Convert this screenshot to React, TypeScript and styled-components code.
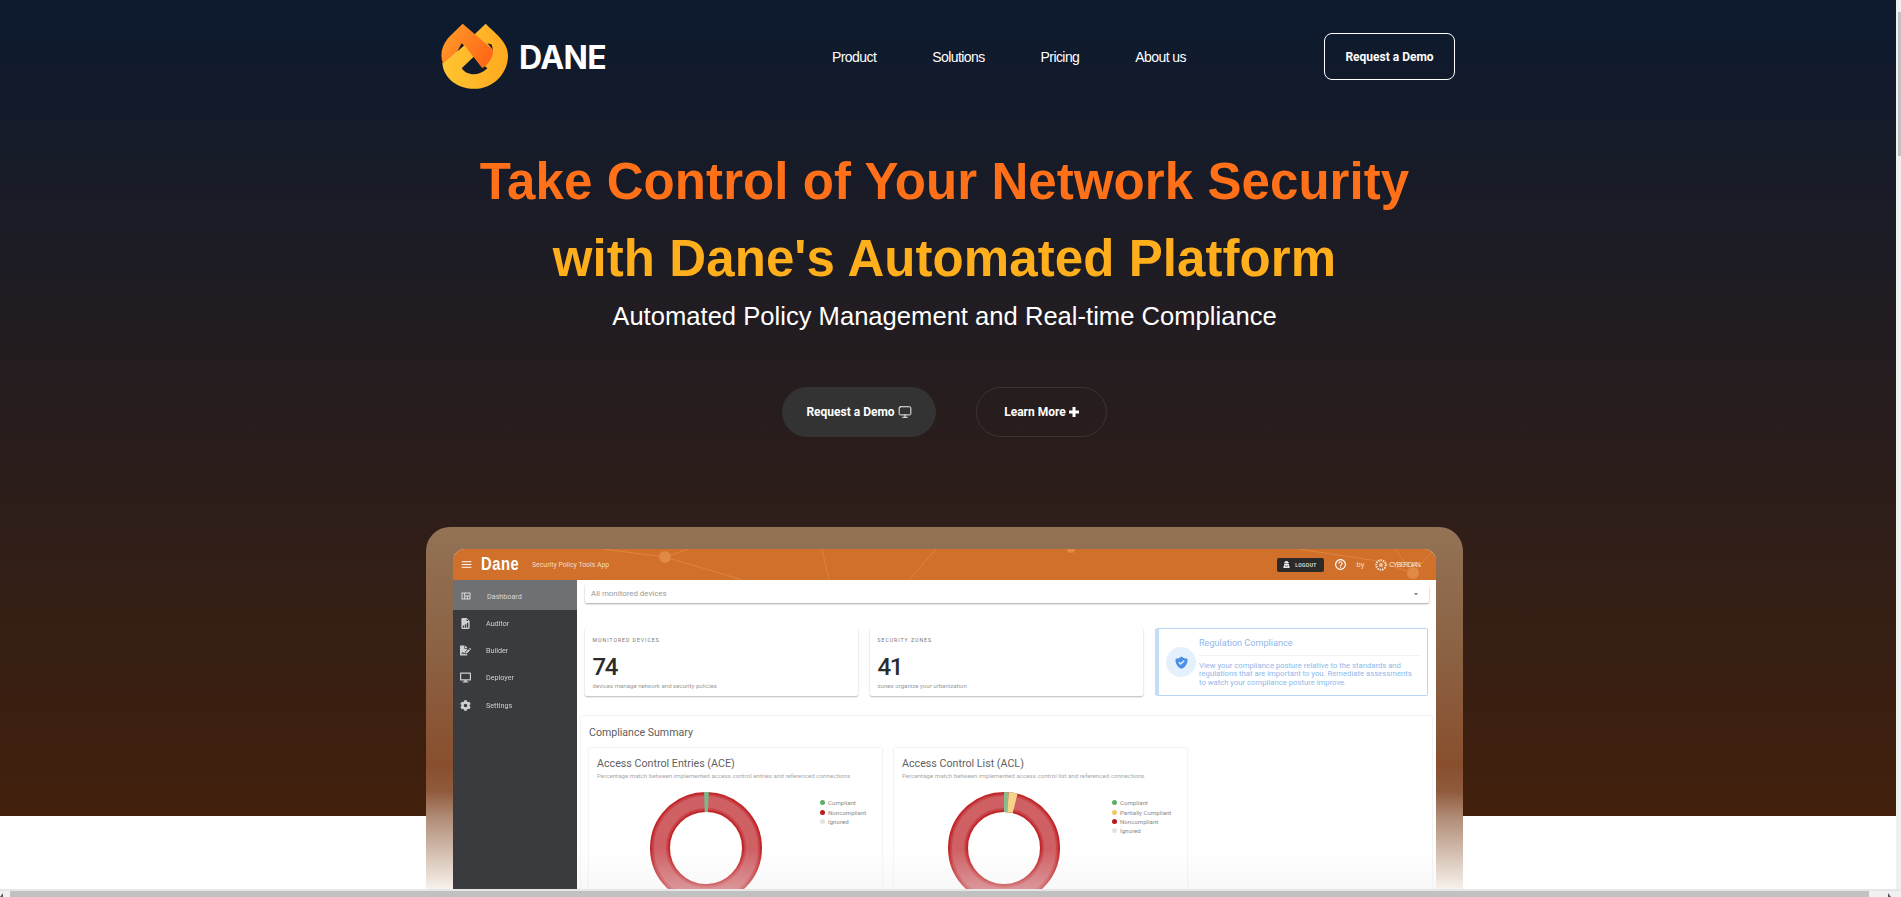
import React from "react";
import styled, { createGlobalStyle } from "styled-components";
import { Monitor } from "lucide-react";
import { FaCog, FaFileSignature, FaUserSecret, FaDesktop } from "react-icons/fa";
import { MdMenu, MdOutlineHelpOutline, MdArrowDropDown, MdOutlineViewQuilt } from "react-icons/md";
import { HiShieldCheck } from "react-icons/hi";
import { BsFileEarmarkBarGraphFill } from "react-icons/bs";

const Global = createGlobalStyle`
  html, body { margin: 0; padding: 0; height: 100%; overflow: hidden; background: #fff; }
  * { box-sizing: border-box; }
`;

const Page = styled.div`
  width: 1896px;
  height: 897px;
  overflow: hidden;
  background: #fff;
  font-family: "Liberation Sans", Arial, sans-serif;
`;
const Hero = styled.section`
  height: 816px;
  background: linear-gradient(180deg, #0c1a2f 0%, #42200c 100%);
  display: flex;
  flex-direction: column;
  align-items: center;
`;
const TopBar = styled.header`
  width: 1014px;
  height: 113px;
  margin-bottom: 30px;
  display: flex;
  align-items: center;
  flex-shrink: 0;
`;
const LogoWrap = styled.a`
  display: flex;
  align-items: center;
  gap: 10px;
  width: 391px;
  color: #fff;
`;
const LogoWord = styled.span`
  font-family: Inter, "Liberation Sans", sans-serif;
  font-weight: 700;
  font-size: 32px;
  line-height: 1;
  letter-spacing: -0.6px;
  margin-top: 2px;
`;
const Nav = styled.nav`
  display: flex;
  gap: 56px;
  flex: 1;
`;
const NavLink = styled.a`
  color: #fff;
  font-size: 14px;
  letter-spacing: -0.58px;
  white-space: nowrap;
`;
const DemoOutline = styled.a`
  width: 131px;
  height: 47px;
  border: 1px solid #fff;
  border-radius: 8px;
  display: flex;
  align-items: center;
  justify-content: center;
  color: #fff;
  font: 700 12px Roboto, sans-serif;
`;
const Center = styled.div`
  width: 1889px;
  margin-right: 7px;
  display: flex;
  flex-direction: column;
  align-items: center;
  flex-shrink: 0;
`;
const Title = styled.h1<{ $color: string }>`
  margin: 0;
  height: 77px;
  line-height: 77px;
  color: ${(p) => p.$color};
  font-size: 51px;
  font-weight: 700;
  letter-spacing: 0.08px;
  white-space: nowrap;
`;
const Sub = styled.p`
  margin: 1px 0 0;
  color: #fff;
  font-size: 25.6px;
  line-height: 36px;
`;
const Actions = styled.div`
  display: flex;
  gap: 40px;
  margin-top: 53px;
`;
const Pill = styled.a<{ $filled?: boolean }>`
  height: 50px;
  width: ${(p) => (p.$filled ? 154 : 131)}px;
  border-radius: 25px;
  background: ${(p) => (p.$filled ? "#333333" : "transparent")};
  border: 1px solid ${(p) => (p.$filled ? "#333333" : "#3e3333")};
  display: flex;
  align-items: center;
  justify-content: center;
  gap: 3px;
  color: #fff;
  font: 700 12px Roboto, sans-serif;
`;
const Laptop = styled.div`
  width: 1037px;
  height: 372px;
  margin-top: 90px;
  padding: 22px 27px 0;
  border-radius: 24px 24px 0 0;
  background: linear-gradient(180deg, #937256 0%, #8c6446 30%, #884f2e 64%, #8f5a3c 71%, #b08c76 78%, #faf5f0 98%);
`;
const Screen = styled.div`
  position: relative;
  height: 350px;
  border-radius: 12px 12px 0 0;
  overflow: hidden;
  background: #fff;
  filter: blur(0.45px);
  font-family: Roboto, sans-serif;
  display: flex;
  flex-direction: column;
`;
const AppBar = styled.div`
  position: relative;
  height: 31px;
  flex-shrink: 0;
  background: #d0702a;
  display: flex;
  align-items: center;
  padding: 0 15px 0 7px;
  color: #fff;
  box-shadow: 0 1px 1px rgba(0, 0, 0, 0.3);
`;
const BarArt = styled.svg`
  position: absolute;
  inset: 0;
  width: 100%;
  height: 100%;
`;
const BarGroup = styled.div<{ $end?: boolean }>`
  position: relative;
  display: flex;
  align-items: center;
  margin-left: ${(p) => (p.$end ? "auto" : "0")};
`;
const Brand = styled.span`
  font: 700 18px "Liberation Sans", sans-serif;
  transform: scaleX(0.82);
  transform-origin: left;
  letter-spacing: 0.7px;
  margin-left: 8px;
  width: 41px;
`;
const AppName = styled.span`
  font-size: 6.9px;
  color: #f5dcc8;
  margin-left: 4px;
  padding-left: 6px;
`;
const Logout = styled.span`
  width: 47px;
  height: 14px;
  background: #2c2a28;
  border-radius: 2px;
  display: flex;
  align-items: center;
  justify-content: center;
  gap: 5px;
  font-size: 5px;
  font-weight: 500;
  letter-spacing: 0.4px;
  color: #eee;
`;
const HelpSlot = styled.span`
  display: flex;
  margin-left: 10px;
`;
const By = styled.span`
  font-size: 7.5px;
  color: #f5dcc8;
  margin-left: 10px;
`;
const Cyber = styled.span`
  display: flex;
  align-items: center;
  gap: 1px;
  margin-left: 10px;
  font: 400 6.5px "Liberation Sans", sans-serif;
  letter-spacing: -0.8px;
  color: #f7e6d8;
`;
const Body = styled.div`
  flex: 1;
  display: flex;
  min-height: 0;
`;
const Side = styled.aside`
  width: 124px;
  background: #3a3b3f;
  flex-shrink: 0;
`;
const SideItem = styled.div<{ $active?: boolean }>`
  height: 30px;
  margin-bottom: -2.7px;
  display: flex;
  align-items: center;
  gap: 15px;
  padding: 2px 0 0 7px;
  font-size: 7.2px;
  color: ${(p) => (p.$active ? "#d8d8d8" : "#d0d0d0")};
  background: ${(p) => (p.$active ? "#6f7072" : "transparent")};
  position: relative;
`;
const Main = styled.main`
  position: relative;
  flex: 1;
  padding: 4px 7px 0 8px;
  background: #fff;
  min-width: 0;
`;
const Fade = styled.div`
  position: absolute;
  left: 0;
  right: 0;
  bottom: 10px;
  height: 40px;
  background: linear-gradient(180deg, rgba(240, 240, 240, 0), rgba(238, 238, 238, 0.38));
`;
const Select = styled.div`
  height: 19px;
  display: flex;
  align-items: center;
  justify-content: space-between;
  padding: 0 8px 0 6px;
  color: #9a9a9a;
  font-size: 7.9px;
  border-radius: 2px;
  box-shadow: 0 1px 2px rgba(0, 0, 0, 0.35);
  background: #fff;
`;
const Cards = styled.div`
  display: grid;
  grid-template-columns: repeat(3, 273px);
  gap: 12px;
  margin-top: 25px;
`;
const Card = styled.div`
  height: 68px;
  padding: 8px 7.5px 0;
  border-radius: 2px;
  box-shadow: 0 1px 2px rgba(0, 0, 0, 0.28);
`;
const Eyebrow = styled.div`
  font-size: 5.2px;
  letter-spacing: 0.95px;
  color: #777;
  line-height: 8px;
`;
const Big = styled.div`
  font-size: 24px;
  line-height: 24px;
  letter-spacing: -1.4px;
  color: #2b2b2b;
  margin-top: 11px;
  font-weight: 500;
`;
const Small = styled.div`
  font-size: 6.1px;
  color: #9a9a9a;
  line-height: 8px;
  margin-top: 3px;
`;
const Notice = styled.div`
  height: 68px;
  border: 1px solid #b9d6f5;
  border-left: 4px solid #c5def8;
  border-radius: 2px;
  display: flex;
  align-items: center;
  padding: 0 7px;
  gap: 3px;
  color: #8fb8ec;
`;
const ShieldDot = styled.span`
  width: 30px;
  height: 30px;
  border-radius: 50%;
  background: #e4f0fc;
  display: flex;
  align-items: center;
  justify-content: center;
  color: #4a8fe8;
  flex-shrink: 0;
`;
const NoticeText = styled.div`
  flex: 1;
`;
const NoticeTitle = styled.div`
  font-size: 9.1px;
  line-height: 13px;
  padding-bottom: 5px;
  border-bottom: 1px solid #eef3f9;
  margin-bottom: 6px;
`;
const NoticeBody = styled.div`
  font-size: 7.7px;
  line-height: 8.4px;
`;
const Panel = styled.section`
  margin: 20px -3px 0 -4px;
  padding: 0 8px;
  height: 200px;
  box-shadow: 0 0 2px rgba(0, 0, 0, 0.14);
`;
const PanelTitle = styled.h2`
  margin: 0;
  padding-top: 10px;
  height: 32px;
  font-size: 10.6px;
  font-weight: 400;
  line-height: 14px;
  color: #5d5d5d;
`;
const Charts = styled.div`
  display: grid;
  grid-template-columns: 293px 293px;
  gap: 12px;
`;
const Chart = styled.div`
  position: relative;
  height: 160px;
  padding: 9px 0 0 8px;
  box-shadow: 0 0 2px rgba(0, 0, 0, 0.14);
`;
const ChartTitle = styled.h3`
  margin: 0;
  font-size: 10.7px;
  font-weight: 400;
  line-height: 13px;
  color: #5f5f5f;
`;
const ChartSub = styled.p`
  margin: 2px 0 0;
  font-size: 6.2px;
  line-height: 8px;
  color: #a9a9a9;
  white-space: nowrap;
`;
const DonutSlot = styled.div<{ $left: number }>`
  position: absolute;
  left: ${(p) => p.$left}px;
  top: 44px;
  width: 112px;
  height: 112px;
`;
const Legend = styled.ul<{ $left: number }>`
  position: absolute;
  left: ${(p) => p.$left}px;
  top: 50px;
  margin: 0;
  padding: 0;
  list-style: none;
`;
const LegendRow = styled.li`
  display: flex;
  align-items: center;
  gap: 3px;
  height: 9.4px;
  font-size: 6.1px;
  color: #8a8a8a;
  white-space: nowrap;
`;
const Dot = styled.i<{ $c: string }>`
  width: 5px;
  height: 5px;
  border-radius: 50%;
  background: ${(p) => p.$c};
`;
const VTrack = styled.div`
  position: fixed;
  top: 0;
  right: 0;
  width: 5px;
  height: 889px;
  background: #f0f0f0;
`;
const VThumb = styled.div`
  position: absolute;
  top: 12px;
  right: 0;
  width: 3px;
  height: 144px;
  background: #c1c1c1;
`;
const HTrack = styled.div`
  position: fixed;
  left: 0;
  bottom: 0;
  width: 100%;
  height: 8px;
  background: #f0f0f0;
  border-top: 2px solid #e6e6e6;
`;
const HThumb = styled.div`
  position: absolute;
  left: 10px;
  top: 0;
  width: 1859px;
  height: 6px;
  background: #c1c1c1;
`;
const Arrow = styled.div<{ $right?: boolean }>`
  position: absolute;
  ${(p) => (p.$right ? "right: 10px;" : "left: 0;")}
  bottom: 0;
  width: 0;
  height: 0;
  border-bottom: 4px solid #555;
  ${(p) => (p.$right ? "border-right: 3px solid transparent;" : "border-left: 3px solid transparent;")}
`;

const Logo = () => (
  <svg width="68" height="67" viewBox="66 70 204 200">
    <defs>
      <linearGradient id="y" x1="0" x2="1" y1="0" y2="0">
        <stop offset="0" stopColor="#ffc531" />
        <stop offset="1" stopColor="#ffa91f" />
      </linearGradient>
      <linearGradient id="o" x1="0" x2="1" y1="0" y2="0.5">
        <stop offset="0" stopColor="#ffa02a" />
        <stop offset="1" stopColor="#ff6a18" />
      </linearGradient>
    </defs>
    <path
      fillRule="evenodd"
      fill="url(#y)"
      d="M200 72 C232 104 267 128 267 167 C267 222 222 267 167 267 C115 267 74 235 70 190 L135 135 L170 100 Z M165 170 L128 205 C142 226 178 232 205 205 Z"
    />
    <path
      fill="url(#o)"
      d="M131 72 L222 150 C224 172 208 195 190 205 L135 135 L72 192 C62 165 68 138 88 114 Z"
    />
    <path fill="#0f1a2d" d="M128 130 L115 155 L135 137 Z M205 130 L222 150 L218 134 Z" />
  </svg>
);

const PlusGlyph = () => (
  <svg width="10" height="10" viewBox="0 0 10 10" fill="#fff">
    <path d="M3.5 0h3v3.5H10v3H6.5V10h-3V6.5H0v-3h3.5z" />
  </svg>
);

const Ring = ({ slices }: { slices: { from: number; to: number; c: string }[] }) => {
  const R = 46;
  const C = 2 * Math.PI * R;
  return (
    <svg width="112" height="112" viewBox="0 0 112 112">
      <circle cx="56" cy="56" r={R} fill="none" stroke="#c22628" strokeWidth="20" />
      <circle cx="56" cy="56" r={R} fill="none" stroke="#c8454a" strokeWidth="16" />
      <circle cx="56" cy="56" r={R} fill="none" stroke="#cf6064" strokeWidth="12" />
      {slices.map((s, i) => (
        <circle
          key={i}
          cx="56"
          cy="56"
          r={R}
          fill="none"
          stroke={s.c}
          strokeWidth="20"
          strokeDasharray={`${((s.to - s.from) * C) / 360} ${C}`}
          transform={`rotate(${s.from - 90} 56 56)`}
        />
      ))}
    </svg>
  );
};

export default function App() {
  return (
    <Page>
      <Global />
      <Hero>
        <TopBar>
          <LogoWrap>
            <Logo />
            <LogoWord>DANE</LogoWord>
          </LogoWrap>
          <Nav>
            <NavLink>Product</NavLink>
            <NavLink>Solutions</NavLink>
            <NavLink>Pricing</NavLink>
            <NavLink>About us</NavLink>
          </Nav>
          <DemoOutline>Request a Demo</DemoOutline>
        </TopBar>
        <Center>
          <Title $color="#ff7019">Take Control of Your Network Security</Title>
          <Title $color="#ffae1c">with Dane's Automated Platform</Title>
          <Sub>Automated Policy Management and Real-time Compliance</Sub>
          <Actions>
            <Pill $filled>
              Request a Demo <Monitor size={14} strokeWidth={1.6} />
            </Pill>
            <Pill>
              Learn More <PlusGlyph />
            </Pill>
          </Actions>
          <Laptop>
            <Screen>
              <AppBar>
                <BarArt viewBox="0 0 983 31" preserveAspectRatio="none">
                  <g stroke="#e08a45" strokeWidth="0.8" fill="none">
                    <path d="M150 0 L212 8 L235 0 M212 8 L290 31 M369 0 L376 31 M483 0 L456 31 M845 0 L925 12 L960 24 L980 2 M942 0 L960 24" />
                  </g>
                  <circle cx="212" cy="8" r="6" fill="#e08a45" />
                  <circle cx="618" cy="0" r="4" fill="#e08a45" />
                  <circle cx="960" cy="24" r="6" fill="#e08a45" />
                </BarArt>
                <BarGroup>
                  <MdMenu size={13} />
                  <Brand>Dane</Brand>
                  <AppName>Security Policy Tools App</AppName>
                </BarGroup>
                <BarGroup $end>
                  <Logout>
                    <FaUserSecret size={7} /> LOGOUT
                  </Logout>
                  <HelpSlot>
                    <MdOutlineHelpOutline size={13} />
                  </HelpSlot>
                  <By>by</By>
                  <Cyber>
                    <svg width="14" height="14" viewBox="0 0 14 14">
                      <circle cx="7" cy="7" r="4.8" fill="none" stroke="#f7e6d8" strokeWidth="2" strokeDasharray="1.4 1" />
                      <circle cx="7" cy="7" r="2" fill="#f7e6d8" opacity="0.7" />
                    </svg>
                    CYBERDIAN.
                  </Cyber>
                </BarGroup>
              </AppBar>
              <Body>
                <Side>
                  <SideItem $active>
                    <MdOutlineViewQuilt size={12} /> Dashboard
                  </SideItem>
                  <SideItem>
                    <BsFileEarmarkBarGraphFill size={11} /> Auditor
                  </SideItem>
                  <SideItem>
                    <FaFileSignature size={11} /> Builder
                  </SideItem>
                  <SideItem>
                    <FaDesktop size={11} /> Deployer
                  </SideItem>
                  <SideItem>
                    <FaCog size={11} /> Settings
                  </SideItem>
                </Side>
                <Main>
                  <Select>
                    All monitored devices
                    <MdArrowDropDown size={10} color="#666" />
                  </Select>
                  <Cards>
                    <Card>
                      <Eyebrow>MONITORED DEVICES</Eyebrow>
                      <Big>74</Big>
                      <Small>devices manage network and security policies</Small>
                    </Card>
                    <Card>
                      <Eyebrow>SECURITY ZONES</Eyebrow>
                      <Big>41</Big>
                      <Small>zones organize your urbanization</Small>
                    </Card>
                    <Notice>
                      <ShieldDot>
                        <HiShieldCheck size={15} />
                      </ShieldDot>
                      <NoticeText>
                        <NoticeTitle>Regulation Compliance</NoticeTitle>
                        <NoticeBody>
                          View your compliance posture relative to the standards and regulations that are important to you. Remediate assessments to watch your compliance posture improve.
                        </NoticeBody>
                      </NoticeText>
                    </Notice>
                  </Cards>
                  <Panel>
                    <PanelTitle>Compliance Summary</PanelTitle>
                    <Charts>
                      <Chart>
                        <ChartTitle>Access Control Entries (ACE)</ChartTitle>
                        <ChartSub>Percentage match between implemented access control entries and referenced connections</ChartSub>
                        <DonutSlot $left={61}>
                          <Ring slices={[{ from: -2, to: 3, c: "#7cb98a" }]} />
                        </DonutSlot>
                        <Legend $left={231}>
                          <LegendRow><Dot $c="#5cae62" />Compliant</LegendRow>
                          <LegendRow><Dot $c="#b71c1c" />Noncompliant</LegendRow>
                          <LegendRow><Dot $c="#e3e3e3" />Ignored</LegendRow>
                        </Legend>
                      </Chart>
                      <Chart>
                        <ChartTitle>Access Control List (ACL)</ChartTitle>
                        <ChartSub>Percentage match between implemented access control list and referenced connections</ChartSub>
                        <DonutSlot $left={54}>
                          <Ring
                            slices={[
                              { from: 0, to: 5, c: "#8dbb8b" },
                              { from: 5, to: 14, c: "#f5d48a" },
                            ]}
                          />
                        </DonutSlot>
                        <Legend $left={218}>
                          <LegendRow><Dot $c="#5cae62" />Compliant</LegendRow>
                          <LegendRow><Dot $c="#f5c56b" />Partially Compliant</LegendRow>
                          <LegendRow><Dot $c="#b71c1c" />Noncompliant</LegendRow>
                          <LegendRow><Dot $c="#e3e3e3" />Ignored</LegendRow>
                        </Legend>
                      </Chart>
                    </Charts>
                  </Panel>
                  <Fade />
                </Main>
              </Body>
            </Screen>
          </Laptop>
        </Center>
      </Hero>
      <VTrack>
        <VThumb />
      </VTrack>
      <HTrack>
        <HThumb />
        <Arrow />
        <Arrow $right />
      </HTrack>
    </Page>
  );
}
